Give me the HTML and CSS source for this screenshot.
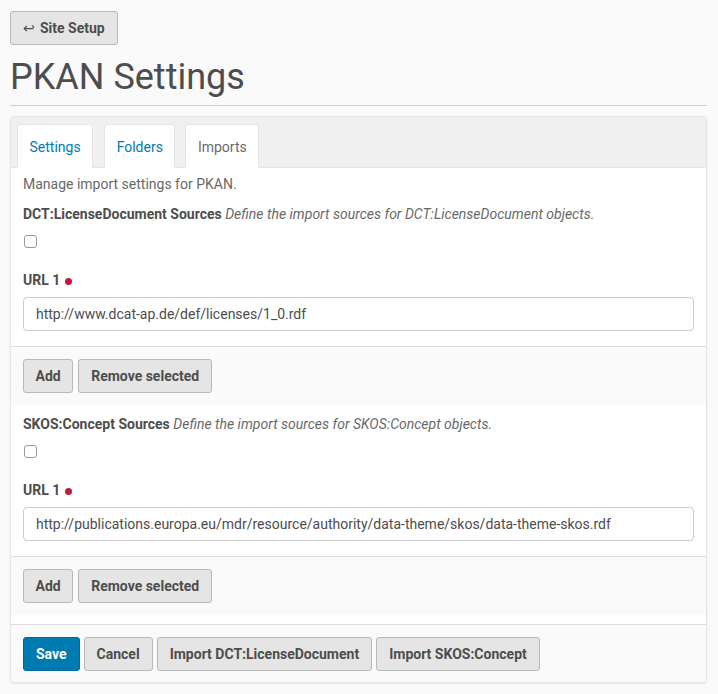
FILE: index.html
```html
<!DOCTYPE html>
<html lang="en">
<head>
<meta charset="utf-8">
<title>PKAN Settings</title>
<link rel="stylesheet" href="styles.css">
</head>
<body>
<div class="page">
  <div class="topbar">
    <a class="btn back" href="#"><span class="arrow">&#x21A9;</span> Site Setup</a>
  </div>
  <h1 class="title">PKAN Settings</h1>
  <div class="panel">
    <nav class="tabs">
      <a class="tab" href="#">Settings</a>
      <a class="tab" href="#">Folders</a>
      <a class="tab active" href="#">Imports</a>
    </nav>
    <div class="tab-body">
      <p class="intro">Manage import settings for PKAN.</p>
      <div class="field">
        <div class="legend"><b>DCT:LicenseDocument Sources</b> <i>Define the import sources for DCT:LicenseDocument objects.</i></div>
        <div class="check-row"><span class="checkbox"></span></div>
        <div class="label">URL 1 <span class="req"></span></div>
        <div class="input">http://www.dcat-ap.de/def/licenses/1_0.rdf</div>
      </div>
      <div class="actions">
        <button class="btn">Add</button>
        <button class="btn">Remove selected</button>
      </div>
      <div class="field">
        <div class="legend"><b>SKOS:Concept Sources</b> <i>Define the import sources for SKOS:Concept objects.</i></div>
        <div class="check-row"><span class="checkbox"></span></div>
        <div class="label">URL 1 <span class="req"></span></div>
        <div class="input">http://publications.europa.eu/mdr/resource/authority/data-theme/skos/data-theme-skos.rdf</div>
      </div>
      <div class="actions">
        <button class="btn">Add</button>
        <button class="btn">Remove selected</button>
      </div>
    </div>
    <div class="footer">
      <button class="btn primary">Save</button>
      <button class="btn">Cancel</button>
      <button class="btn">Import DCT:LicenseDocument</button>
      <button class="btn">Import SKOS:Concept</button>
    </div>
  </div>
</div>
</body>
</html>
```
FILE: styles.css
```css
* { box-sizing: border-box; }

html, body {
  margin: 0;
  padding: 0;
  background: #fafafa;
}

body {
  font-family: Roboto, "Liberation Sans", sans-serif;
  font-size: 14px;
  line-height: 20px;
  color: #4d4d4d;
}

.page {
  padding: 11px 11px 10px 10px;
}

.topbar {
  display: flex;
}

.btn {
  display: inline-flex;
  align-items: center;
  height: 34px;
  padding: 0 12px;
  font-family: Roboto, "Liberation Sans", sans-serif;
  font-size: 14px;
  font-weight: 700;
  color: #4d4d4d;
  background: #e5e5e5;
  border: 1px solid #b8b8b8;
  border-radius: 3px;
  text-decoration: none;
  cursor: pointer;
}

.btn.back {
  height: 34px;
  padding: 0 12px 0 12px;
}

.back .arrow {
  font-weight: 400;
  font-size: 14px;
  margin-right: 5px;
  color: #4d4d4d;
}

.title {
  margin: 9px 0 0 0;
  padding-bottom: 5px;
  font-size: 36px;
  line-height: 46px;
  font-weight: 400;
  color: #4d4d4d;
  border-bottom: 1px solid #cccccc;
}

.panel {
  margin-top: 10px;
  background: #ffffff;
  border: 1px solid #e5e5e5;
  border-radius: 4px;
  box-shadow: 0 1px 2px rgba(0, 0, 0, 0.08);
  overflow: hidden;
}

.tabs {
  display: flex;
  gap: 10px;
  padding: 7px 6px 0 6px;
  background: #f0f0f0;
  border-bottom: 1px solid #e5e5e5;
}

.tab {
  display: block;
  height: 44px;
  padding: 0 11.5px;
  line-height: 44px;
  font-size: 14px;
  color: #007bb1;
  text-decoration: none;
  background: #ffffff;
  border: 1px solid #e5e5e5;
  border-bottom: none;
  border-radius: 4px 4px 0 0;
  margin-bottom: -1px;
}

.tab:first-child { margin-right: 1px; }

.tab.active {
  color: #696969;
}

.intro {
  margin: 6px 12px 0 12px;
  color: #696969;
}

.field {
  padding: 10px 12px 15px 12px;
}

.field + .actions + .field {
  padding-top: 9px;
}

.legend b {
  font-weight: 700;
  color: #4d4d4d;
}

.legend i {
  color: #696969;
}

.check-row {
  margin-top: 11px;
  height: 13px;
  display: flex;
  padding-left: 1px;
}

.checkbox {
  display: block;
  width: 13px;
  height: 13px;
  border: 1px solid #999999;
  border-radius: 3px;
  background: #ffffff;
}

.label {
  margin-top: 22px;
  font-weight: 700;
  color: #4d4d4d;
  display: flex;
  align-items: center;
  gap: 5px;
}

.req {
  display: inline-block;
  width: 7px;
  height: 7px;
  border-radius: 50%;
  background: #c4183c;
  margin-top: 2px;
}

.input {
  margin-top: 7px;
  height: 34px;
  padding: 0 12px;
  line-height: 32px;
  border: 1px solid #cccccc;
  border-radius: 4px;
  background: #ffffff;
  color: #4d4d4d;
  white-space: nowrap;
  overflow: hidden;
}

.actions {
  display: flex;
  gap: 5px;
  padding: 12px 12px;
  background: #fafafa;
  border-top: 1px solid #dddddd;
}

.actions .btn:first-child {
  padding: 0 11.5px;
}

.footer {
  display: flex;
  gap: 4px;
  margin-top: 9px;
  padding: 12px 12px 11px 12px;
  background: #fafafa;
  border-top: 1px solid #dddddd;
}

.btn.primary {
  background: #007bb1;
  border-color: #00679a;
  color: #ffffff;
}
```
